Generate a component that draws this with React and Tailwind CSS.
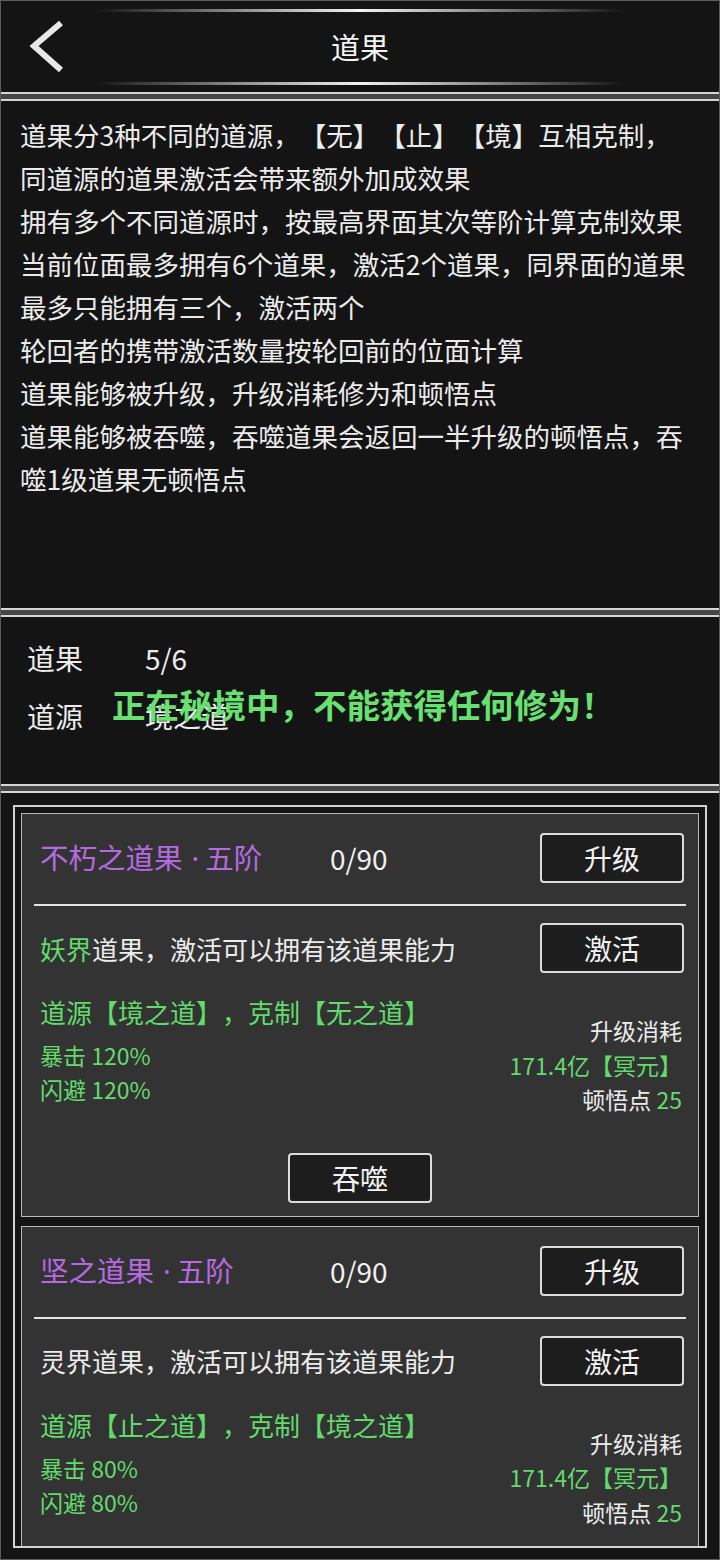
import React from "react";

const rules = [
  "道果分3种不同的道源，【无】【止】【境】互相克制，",
  "同道源的道果激活会带来额外加成效果",
  "拥有多个不同道源时，按最高界面其次等阶计算克制效果",
  "当前位面最多拥有6个道果，激活2个道果，同界面的道果",
  "最多只能拥有三个，激活两个",
  "轮回者的携带激活数量按轮回前的位面计算",
  "道果能够被升级，升级消耗修为和顿悟点",
  "道果能够被吞噬，吞噬道果会返回一半升级的顿悟点，吞",
  "噬1级道果无顿悟点",
];

const cards = [
  {
    name: "不朽之道果",
    realm: "妖界",
    realmGreen: true,
    source: "境之道",
    counter: "无之道",
    crit: "120%",
    dodge: "120%",
  },
  {
    name: "坚之道果",
    realm: "灵界",
    realmGreen: false,
    source: "止之道",
    counter: "境之道",
    crit: "80%",
    dodge: "80%",
  },
];

const Divider = () => (
  <div className="h-[9px] shrink-0 border-y-2 border-[#d6d6d6] bg-[#464646]" />
);

const GlowLine = () => (
  <div className="mx-auto h-[3px] w-[530px] bg-gradient-to-r from-transparent via-[#f4f4f4] to-transparent" />
);

const Btn = ({ children }) => (
  <button className="flex h-[50px] w-[144px] shrink-0 items-center justify-center rounded-[4px] border-2 border-[#dcdcdc] bg-[#1d1d1d] text-[28px] text-[#f2f2f2]">
    {children}
  </button>
);

const DaoCard = ({ card }) => (
  <div className="shrink-0 border border-[#b8b8b8] bg-[#333333] pt-[19px] pb-[13px]">
    <div className="flex items-center pl-[18px] pr-[14px]">
      <span className="w-[290px] whitespace-nowrap text-[28.5px] text-[#b66ae2]">
        {card.name}
        <span className="ml-[9px] mr-[6px] font-['Noto_Sans',sans-serif]">·</span>
        五阶
      </span>
      <span className="text-[28px] text-[#f0f0f0]">0/90</span>
      <div className="flex-1" />
      <Btn>升级</Btn>
    </div>
    <div className="mx-[12px] mt-[21px] h-[2px] bg-[#e4e4e4]" />
    <div className="mt-[17px] flex items-center pl-[18px] pr-[14px]">
      <span className="text-[26px] text-[#ececec]">
        <span className={card.realmGreen ? "text-[#62db6c]" : ""}>{card.realm}</span>
        道果，激活可以拥有该道果能力
      </span>
      <div className="flex-1" />
      <Btn>激活</Btn>
    </div>
    <div className="mt-[21px] flex pl-[18px] pr-[16px]">
      <div className="flex flex-col">
        <div className="text-[26px] leading-[36px] text-[#62db6c]">
          道源【{card.source}】，克制【{card.counter}】
        </div>
        <div className="mt-[8px] text-[23px] leading-[34px] text-[#62db6c]">暴击 {card.crit}</div>
        <div className="text-[23px] leading-[34px] text-[#62db6c]">闪避 {card.dodge}</div>
      </div>
      <div className="flex-1" />
      <div className="flex flex-col items-end pt-[19px] text-[23px] leading-[34.5px]">
        <div className="text-[#ececec]">升级消耗</div>
        <div className="text-[#62db6c]">171.4亿【冥元】</div>
        <div className="text-[#ececec]">
          顿悟点 <span className="text-[#62db6c]">25</span>
        </div>
      </div>
    </div>
    <div className="mt-[36px] flex justify-center">
      <Btn>吞噬</Btn>
    </div>
  </div>
);

export default function App() {
  return (
    <div className="flex h-[1560px] w-[720px] flex-col overflow-hidden border border-[#5c5c5c] bg-[#141414] font-['Noto_Sans_CJK_SC','Noto_Sans',sans-serif] text-[#ececec] [text-spacing-trim:space-all]">
      {/* header */}
      <div className="h-[91px] shrink-0 pt-[8px]">
        <GlowLine />
        <div className="relative flex h-[70px] items-center justify-center">
          <svg
            className="absolute left-[26px] top-[8px]"
            width="40"
            height="54"
            viewBox="0 0 40 54"
          >
            <polyline
              points="34,3 7,26 34,50"
              fill="none"
              stroke="#e8e8e8"
              strokeWidth="6"
            />
          </svg>
          <span className="text-[29px] text-[#f4f4f4]">道果</span>
        </div>
        <GlowLine />
      </div>
      <Divider />

      {/* rules */}
      <div className="h-[507px] shrink-0 px-[19px] pt-[12px] text-[26.5px] leading-[43px] text-[#ececec]">
        {rules.map((line, i) => (
          <div key={i} className="whitespace-nowrap">
            {line}
          </div>
        ))}
      </div>
      <Divider />

      {/* summary */}
      <div className="relative h-[167px] shrink-0 px-[26px] pt-[12px] text-[28px] leading-[58px]">
        <div className="flex">
          <span className="w-[118px]">道果</span>
          <span>5/6</span>
        </div>
        <div className="flex">
          <span className="w-[118px]">道源</span>
          <span>境之道</span>
        </div>
        <div className="absolute left-[111px] top-[65px] whitespace-nowrap text-[33.5px] font-semibold leading-[44px] text-[#68e172]">
          正在秘境中，不能获得任何修为！
        </div>
      </div>
      <Divider />

      {/* list */}
      <div className="flex min-h-0 flex-1 flex-col px-[12px] pt-[12px] pb-[11px]">
        <div className="flex min-h-0 flex-1 flex-col gap-[9px] overflow-hidden border-2 border-[#d2d2d2] p-[6px]">
          {cards.map((c) => (
            <DaoCard key={c.name} card={c} />
          ))}
        </div>
      </div>
    </div>
  );
}
